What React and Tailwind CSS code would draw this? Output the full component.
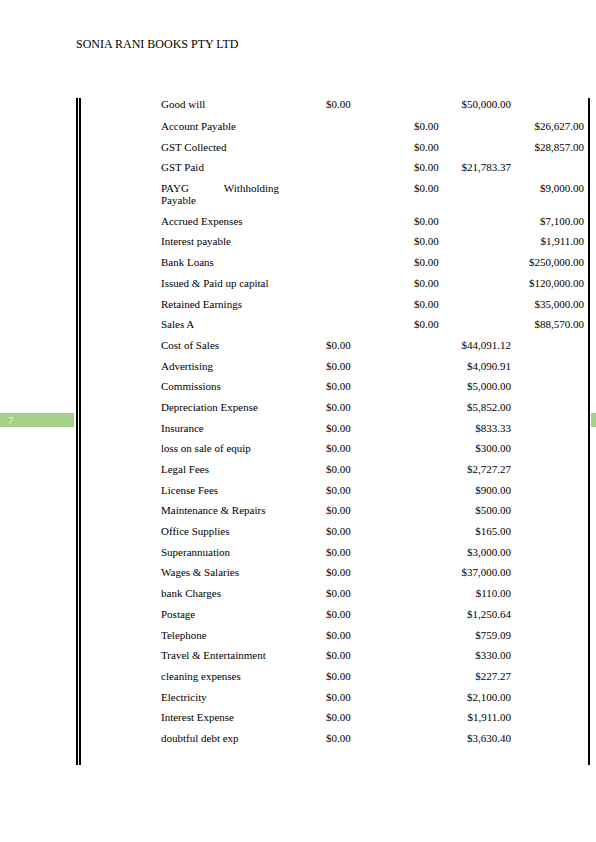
const rows = [
  ['Good will', '$0.00', '', '$50,000.00', ''],
  ['Account Payable', '', '$0.00', '', '$26,627.00'],
  ['GST Collected', '', '$0.00', '', '$28,857.00'],
  ['GST Paid', '', '$0.00', '$21,783.37', ''],
  ['PAYG Withholding Payable', '', '$0.00', '', '$9,000.00'],
  ['Accrued Expenses', '', '$0.00', '', '$7,100.00'],
  ['Interest payable', '', '$0.00', '', '$1,911.00'],
  ['Bank Loans', '', '$0.00', '', '$250,000.00'],
  ['Issued & Paid up capital', '', '$0.00', '', '$120,000.00'],
  ['Retained Earnings', '', '$0.00', '', '$35,000.00'],
  ['Sales A', '', '$0.00', '', '$88,570.00'],
  ['Cost of Sales', '$0.00', '', '$44,091.12', ''],
  ['Advertising', '$0.00', '', '$4,090.91', ''],
  ['Commissions', '$0.00', '', '$5,000.00', ''],
  ['Depreciation Expense', '$0.00', '', '$5,852.00', ''],
  ['Insurance', '$0.00', '', '$833.33', ''],
  ['loss on sale of equip', '$0.00', '', '$300.00', ''],
  ['Legal Fees', '$0.00', '', '$2,727.27', ''],
  ['License Fees', '$0.00', '', '$900.00', ''],
  ['Maintenance & Repairs', '$0.00', '', '$500.00', ''],
  ['Office Supplies', '$0.00', '', '$165.00', ''],
  ['Superannuation', '$0.00', '', '$3,000.00', ''],
  ['Wages & Salaries', '$0.00', '', '$37,000.00', ''],
  ['bank Charges', '$0.00', '', '$110.00', ''],
  ['Postage', '$0.00', '', '$1,250.64', ''],
  ['Telephone', '$0.00', '', '$759.09', ''],
  ['Travel & Entertainment', '$0.00', '', '$330.00', ''],
  ['cleaning expenses', '$0.00', '', '$227.27', ''],
  ['Electricity', '$0.00', '', '$2,100.00', ''],
  ['Interest Expense', '$0.00', '', '$1,911.00', ''],
  ['doubtful debt exp', '$0.00', '', '$3,630.40', ''],
];

export default function App() {
  return (
    <div className="relative w-[596px] h-[842px] bg-white text-black font-['Liberation_Serif',serif] overflow-hidden">
      {/* margin marker */}
      <div className="absolute left-0 top-[413px] w-[74px] h-[14px] bg-[#a8d08d] text-[#eef6e8] text-[11px] leading-[14px] pl-[8px]">7</div>
      <div className="absolute left-[591px] top-[413px] w-[5px] h-[14px] bg-[#a8d08d]" />

      <div className="pt-[37px] pl-[76px] text-[12px] leading-[14px]">SONIA RANI BOOKS PTY LTD</div>

      <div className="mt-[47px] ml-[76px] w-[514px] border-l-[5px] border-double border-black border-r-2 pb-[12px] text-[11px] leading-[12px]">
        {rows.map((r, i) => (
          <div key={i} className={`grid grid-cols-[165px_88px_41px_56px_73px] pl-[80px] ${i === 0 ? 'pb-[10px]' : 'pb-[8.7px]'}`}>
            <div className="w-[118px] text-justify">{r[0]}</div>
            <div>{r[1]}</div>
            <div>{r[2]}</div>
            <div className="text-right whitespace-nowrap">{r[3]}</div>
            <div className="text-right whitespace-nowrap">{r[4]}</div>
          </div>
        ))}
      </div>
    </div>
  );
}
